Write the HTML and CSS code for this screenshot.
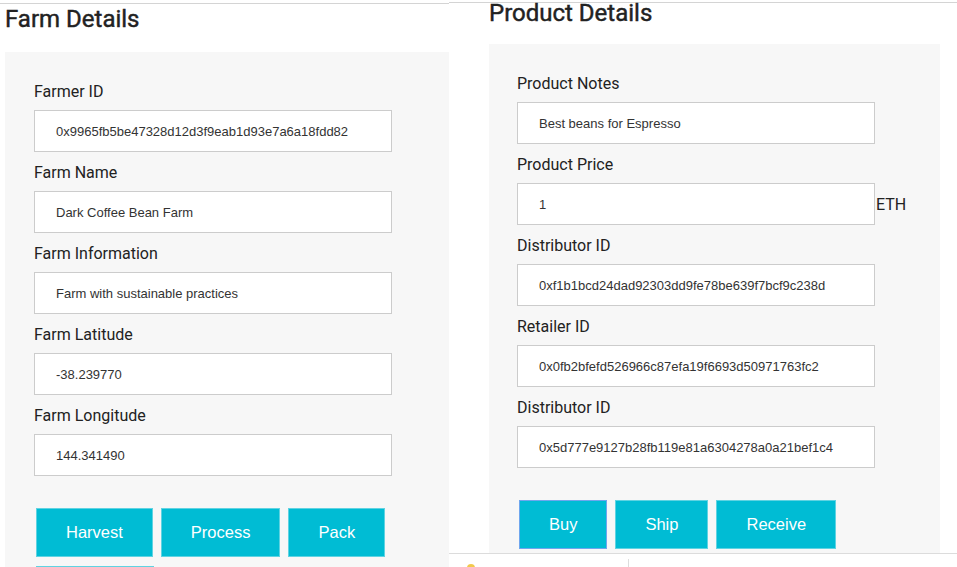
FILE: index.html
```html
<!DOCTYPE html>
<html>
<head>
<meta charset="utf-8">
<link rel="stylesheet" href="styles.css">
</head>
<body>
<div class="page">
  <section class="shot shot-left">
    <h2 class="title title-left">Farm Details</h2>
    <div class="panel panel-left">
      <div class="field">
        <label class="label">Farmer ID</label>
        <input class="input" type="text" value="0x9965fb5be47328d12d3f9eab1d93e7a6a18fdd82">
      </div>
      <div class="field">
        <label class="label">Farm Name</label>
        <input class="input" type="text" value="Dark Coffee Bean Farm">
      </div>
      <div class="field">
        <label class="label">Farm Information</label>
        <input class="input" type="text" value="Farm with sustainable practices">
      </div>
      <div class="field">
        <label class="label">Farm Latitude</label>
        <input class="input" type="text" value="-38.239770">
      </div>
      <div class="field">
        <label class="label">Farm Longitude</label>
        <input class="input" type="text" value="144.341490">
      </div>
      <div class="actions">
        <button class="btn">Harvest</button>
        <button class="btn">Process</button>
        <button class="btn">Pack</button>
        <button class="btn">ForSale</button>
      </div>
    </div>
  </section>
  <section class="shot shot-right">
    <h2 class="title title-right">Product Details</h2>
    <div class="panel panel-right">
      <div class="field">
        <label class="label">Product Notes</label>
        <input class="input" type="text" value="Best beans for Espresso">
      </div>
      <div class="field">
        <label class="label">Product Price</label>
        <div class="price-row">
          <input class="input" type="text" value="1">
          <span class="unit">ETH</span>
        </div>
      </div>
      <div class="field">
        <label class="label">Distributor ID</label>
        <input class="input" type="text" value="0xf1b1bcd24dad92303dd9fe78be639f7bcf9c238d">
      </div>
      <div class="field">
        <label class="label">Retailer ID</label>
        <input class="input" type="text" value="0x0fb2bfefd526966c87efa19f6693d50971763fc2">
      </div>
      <div class="field">
        <label class="label">Distributor ID</label>
        <input class="input" type="text" value="0x5d777e9127b28fb119e81a6304278a0a21bef1c4">
      </div>
      <div class="actions">
        <button class="btn btn-focus">Buy</button>
        <button class="btn">Ship</button>
        <button class="btn">Receive</button>
      </div>
    </div>
    <div class="bottom-bar">
      <span class="bar-icon"></span>
      <span class="bar-divider"></span>
    </div>
  </section>
</div>
</body>
</html>
```

FILE: styles.css
```css
html, body {
  margin: 0;
  padding: 0;
  background: #ffffff;
  overflow: hidden;
}

body {
  font-family: Roboto, "Liberation Sans", sans-serif;
  color: #222222;
  width: 957px;
  height: 567px;
}

.page {
  display: flex;
  align-items: flex-start;
  height: 567px;
}

.shot {
  overflow: hidden;
  height: 567px;
  box-sizing: border-box;
}

.shot-left {
  width: 449px;
  flex: none;
  padding-top: 3px;
}

.shot-left::before,
.shot-right::before {
  content: "";
  display: block;
  height: 1px;
  background: #d4d4d4;
}

.shot-right {
  flex: 1;
  padding-top: 2px;
  display: flex;
  flex-direction: column;
}

.title {
  font-family: Roboto, "Liberation Sans", sans-serif;
  font-weight: 400;
  -webkit-text-stroke: 0.45px #222222;
  font-size: 24px;
  line-height: 28px;
  margin: 0;
  color: #222222;
}

.title-left {
  margin: 1px 0 19px 5px;
}

.title-right {
  margin: -4px 0 17px 40px;
}

.panel {
  background: #f7f7f7;
  padding-top: 30px;
  box-sizing: border-box;
}

.panel-left {
  margin-left: 5px;
  width: 460px;
  padding-left: 29px;
  padding-bottom: 40px;
}

.panel-right {
  margin-left: 40px;
  width: 451px;
  padding-left: 28px;
  height: 509px;
  overflow: hidden;
  flex: none;
}

.field {
  display: flex;
  flex-direction: column;
  align-items: flex-start;
  margin-bottom: 11px;
}

.label {
  font-size: 16px;
  line-height: 19px;
  margin-bottom: 9px;
  color: #222222;
}

.input {
  box-sizing: border-box;
  width: 358px;
  height: 42px;
  border: 1px solid #cccccc;
  border-radius: 0;
  background: #ffffff;
  padding: 0 0 0 21px;
  margin: 0;
  font-family: "Liberation Sans", Arial, sans-serif;
  font-size: 13px;
  color: #333333;
  outline: none;
}

.price-row {
  display: flex;
  align-items: center;
}

.unit {
  font-size: 16px;
  margin-left: 1px;
  color: #222222;
}

.actions {
  display: flex;
  flex-wrap: wrap;
  column-gap: 8px;
  row-gap: 9px;
  width: 357px;
  margin-top: 32px;
  padding-left: 2px;
  box-sizing: border-box;
}

.btn {
  height: 49px;
  padding: 0 29px;
  background: #00bcd4;
  border: 1px solid #5fd3e2;
  border-radius: 0;
  color: #ffffff;
  font-family: "Liberation Sans", Arial, sans-serif;
  font-size: 16.5px;
  cursor: pointer;
}

.btn-focus {
  border-color: #6fa6ee;
}

.bottom-bar {
  flex: 1;
  border-top: 1px solid #dcdcdc;
  background: #ffffff;
  position: relative;
}

.bar-icon {
  position: absolute;
  left: 18px;
  top: 10px;
  width: 8px;
  height: 8px;
  border-radius: 50%;
  background: #f2c94c;
}

.bar-divider {
  position: absolute;
  left: 179px;
  top: 5px;
  width: 1px;
  height: 14px;
  background: #dddddd;
}
```
